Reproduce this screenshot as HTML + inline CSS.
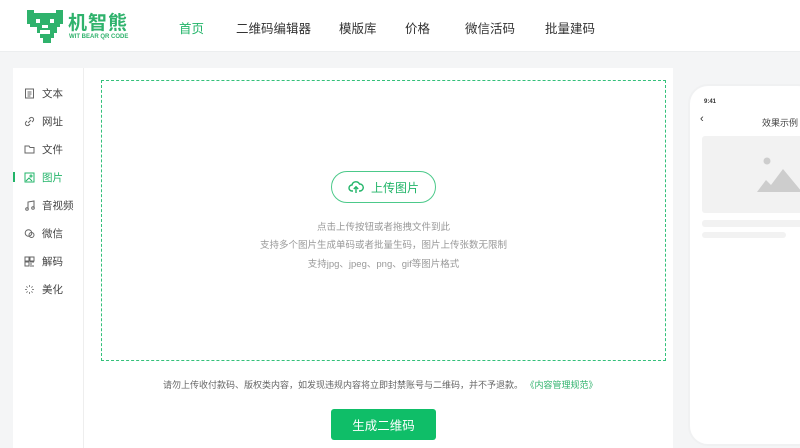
<!DOCTYPE html>
<html><head><meta charset="utf-8"><style>
*{margin:0;padding:0;box-sizing:border-box}
body{width:800px;height:446px;overflow:hidden;background:#f4f5f6;font-family:"Liberation Sans","Noto Sans CJK SC",sans-serif;position:relative}
.hdr{position:absolute;left:0;top:0;width:800px;height:52px;background:#fff;border-bottom:1px solid #eceeef}
.nav{position:absolute;top:18px;font-size:12.5px;color:#333}
.card{position:absolute;left:13px;top:68px;width:660px;height:380px;background:#fff}
.side{position:absolute;left:13px;top:68px;width:71px;height:380px;border-right:1px solid #eee}
.it{position:absolute;left:24px;font-size:10.5px;color:#444;display:flex;align-items:center}
.it svg{width:11px;height:11px;margin-right:7px}
.drop{position:absolute;left:101px;top:80px;width:565px;height:281px;border:1px dashed #33c07a}
.up{position:absolute;left:331px;top:171px;width:105px;height:32px;border:1px solid #4cc98a;border-radius:16px;color:#21b468;font-size:12px;display:flex;align-items:center;justify-content:center}
.tip{position:absolute;left:101px;width:565px;text-align:center;font-size:9.5px;color:#999}
.btn{position:absolute;left:331px;top:409px;width:105px;height:31px;background:#0fbe68;border-radius:3px;color:#fff;font-size:12.5px;display:flex;align-items:center;justify-content:center}
.phone{position:absolute;left:688px;top:84px;width:130px;height:362px;border:2px solid #f0f1f2;border-radius:20px;background:#fff}
</style></head><body>
<div class="hdr">
<svg style="position:absolute;left:27px;top:10px" width="36" height="33" viewBox="0 0 36 33"><path fill="#2fb26c" d="M0 0h7v3h22V0h7v14h-3v3h-3v6h-3v5h-3v5h-8v-5h-3v-5h-3v-6H3v-3H0z"/><path fill="#fff" d="M9 9h4v4H9zM23 9h4v4h-4zM15 15h6v3h-6zM13 20h10v4H13z"/></svg>
<div style="position:absolute;left:68px;top:8px;font-size:19px;font-weight:bold;color:#2fb26c;letter-spacing:1px">机智熊</div>
<div style="position:absolute;left:69px;top:34px;font-size:6px;color:#2fb26c;font-weight:bold">WIT BEAR QR CODE</div>
<div class="nav" style="left:179px;color:#21b468">首页</div>
<div class="nav" style="left:236px">二维码编辑器</div>
<div class="nav" style="left:339px">模版库</div>
<div class="nav" style="left:405px">价格</div>
<div class="nav" style="left:465px">微信活码</div>
<div class="nav" style="left:545px">批量建码</div>
</div>
<div class="card"></div>
<div class="side"></div>
<div style="position:absolute;left:13px;top:172px;width:2px;height:10px;background:#21b468"></div>
<div class="it" style="top:86px"><svg viewBox="0 0 11 11" fill="none" stroke="#666"><rect x="1.5" y="1" width="8" height="9"/><path d="M3.5 4h4M3.5 6h4M3.5 8h3"/></svg>文本</div>
<div class="it" style="top:114px"><svg viewBox="0 0 11 11" fill="none" stroke="#666"><path d="M4 7l3-3M5 3l1-1a2 2 0 013 3l-1 1M6 8l-1 1a2 2 0 01-3-3l1-1"/></svg>网址</div>
<div class="it" style="top:142px"><svg viewBox="0 0 11 11" fill="none" stroke="#666"><path d="M1 2h4l1 1.5h4V9H1z"/></svg>文件</div>
<div class="it" style="top:170px;color:#21b468"><svg viewBox="0 0 11 11" fill="none" stroke="#21b468"><rect x="1" y="1" width="9" height="9"/><path d="M2 9l3-3 3 3"/><circle cx="7" cy="4" r="1"/></svg>图片</div>
<div class="it" style="top:198px"><svg viewBox="0 0 11 11" fill="none" stroke="#666"><path d="M4 9V2l6-1v7"/><circle cx="3" cy="9" r="1.3"/><circle cx="9" cy="8" r="1.3"/></svg>音视频</div>
<div class="it" style="top:226px"><svg viewBox="0 0 11 11" fill="none" stroke="#666"><circle cx="4.5" cy="5" r="3.3"/><circle cx="7.5" cy="7" r="2.5"/></svg>微信</div>
<div class="it" style="top:254px"><svg viewBox="0 0 11 11" fill="none" stroke="#666"><rect x="1" y="1" width="4" height="4"/><rect x="6" y="1" width="4" height="4"/><rect x="1" y="6" width="4" height="4"/><path d="M6 6h4M6 8h2M6 10h4"/></svg>解码</div>
<div class="it" style="top:282px"><svg viewBox="0 0 11 11" fill="none" stroke="#888"><path d="M5.5 1v2M5.5 8v2M1 5.5h2M8 5.5h2M2.3 2.3l1.4 1.4M7.3 7.3l1.4 1.4M2.3 8.7l1.4-1.4M7.3 3.7l1.4-1.4"/></svg>美化</div>
<div class="drop"></div>
<div class="up"><svg width="16" height="14" viewBox="0 0 16 14" fill="none" stroke="#21b468" stroke-width="1.4" style="margin-right:7px"><path d="M5 11H4a3 3 0 010-6 4 4 0 017.5-1A3.5 3.5 0 0112 11h-1"/><path d="M8 13V7M5.8 9L8 6.8 10.2 9"/></svg>上传图片</div>
<div class="tip" style="top:219px">点击上传按钮或者拖拽文件到此</div>
<div class="tip" style="top:237px">支持多个图片生成单码或者批量生码，图片上传张数无限制</div>
<div class="tip" style="top:256px">支持jpg、jpeg、png、gif等图片格式</div>
<div style="position:absolute;left:163px;top:378px;font-size:9px;color:#666;white-space:nowrap">请勿上传收付款码、版权类内容，如发现违规内容将立即封禁账号与二维码，并不予退款。 <span style="color:#2fb26c">《内容管理规范》</span></div>
<div class="btn">生成二维码</div>
<div class="phone">
<div style="position:absolute;left:14px;top:13px;font-size:6px;font-weight:bold;color:#333">9:41</div>
<div style="position:absolute;left:10px;top:27px;font-size:11px;color:#333">‹</div>
<div style="position:absolute;left:72px;top:30px;font-size:9px;color:#444">效果示例</div>
<div style="position:absolute;left:12px;top:50px;width:120px;height:77px;background:#f2f2f2;border-radius:3px"></div>
<svg style="position:absolute;left:67px;top:70px" width="45" height="36" viewBox="0 0 45 36"><circle cx="10" cy="5" r="3.5" fill="#cdcdcd"/><path fill="#cdcdcd" d="M0 36l9-12 5 5 12-16 19 23z"/></svg>
<div style="position:absolute;left:12px;top:134px;width:120px;height:7px;background:#f2f2f2;border-radius:3px"></div>
<div style="position:absolute;left:12px;top:146px;width:84px;height:6px;background:#f2f2f2;border-radius:3px"></div>
</div>
</body></html>
